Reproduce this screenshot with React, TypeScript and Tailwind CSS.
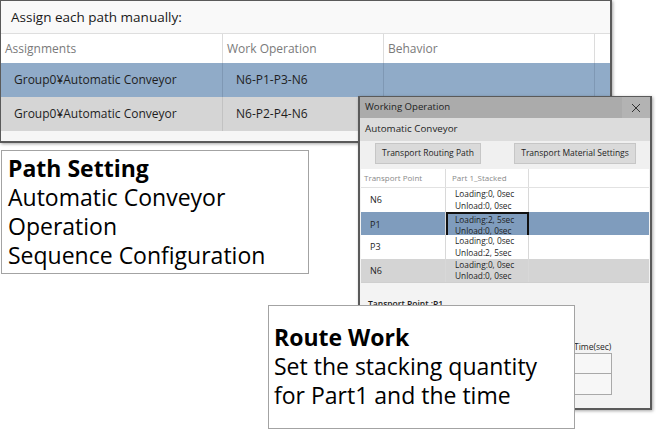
import React from "react";

const mainRows = [
  { group: "Group0¥Automatic Conveyor", op: "N6-P1-P3-N6", selected: true },
  { group: "Group0¥Automatic Conveyor", op: "N6-P2-P4-N6", selected: false },
];

const points = [
  { name: "N6", load: "Loading:0, 0sec", unload: "Unload:0, 0sec", bg: "bg-white" },
  { name: "P1", load: "Loading:2, 5sec", unload: "Unload:0, 0sec", bg: "bg-[#7f9cbd]", active: true },
  { name: "P3", load: "Loading:0, 0sec", unload: "Unload:2, 5sec", bg: "bg-white" },
  { name: "N6", load: "Loading:0, 0sec", unload: "Unload:0, 0sec", bg: "bg-[#d4d4d4]" },
];

function AssignWindow() {
  return (
    <div className="absolute left-0 top-0 w-[612px] h-[143px] border border-[#5a5a5a] border-r-2 border-b-2 bg-[#f6f6f6] flex flex-col shadow-[1px_1px_3px_rgba(0,0,0,0.35)]">
      <div className="h-[33px] shrink-0 flex items-center pl-[10px] bg-[#f9f9f9] border-b border-[#dedede] text-[13.5px] text-[#1a1a1a]">
        Assign each path manually:
      </div>
      <div className="h-[29px] shrink-0 grid grid-cols-[222px_161px_211px_1fr] bg-white text-[12px] text-[#7a7a7a]">
        <div className="flex items-center pl-[4px] border-r border-[#dcdcdc]">Assignments</div>
        <div className="flex items-center pl-[4px] border-r border-[#dcdcdc]">Work Operation</div>
        <div className="flex items-center pl-[4px] border-r border-[#dcdcdc]">Behavior</div>
        <div />
      </div>
      {mainRows.map((r, i) => (
        <div
          key={i}
          className={`h-[34px] shrink-0 grid grid-cols-[222px_161px_211px_1fr] text-[12px] text-[#1e1e1e] ${
            r.selected ? "bg-[#90abc8]" : "bg-[#d5d5d5]"
          }`}
        >
          <div className={`flex items-center pl-[13px] border-r ${r.selected ? "border-[#7f98b4]" : "border-[#c2c2c2]"}`}>{r.group}</div>
          <div className={`flex items-center pl-[13px] border-r ${r.selected ? "border-[#7f98b4]" : "border-[#c2c2c2]"}`}>{r.op}</div>
          <div className={`border-r ${r.selected ? "border-[#7f98b4]" : "border-[#c2c2c2]"}`} />
          <div />
        </div>
      ))}
    </div>
  );
}

function WorkingWindow() {
  return (
    <div className="absolute left-[358px] top-[96px] w-[294px] h-[314px] border border-[#5a5a5a] border-l-2 border-r-2 border-b-2 bg-[#f3f3f3] flex flex-col shadow-[1px_1px_3px_rgba(0,0,0,0.35)] text-[#1e1e1e]">
      <div className="h-[21px] shrink-0 flex items-center justify-between bg-[#ababab] text-[9.6px]">
        <span className="pl-[5px]">Working Operation</span>
        <span className="w-[28px] h-full flex items-center justify-center bg-[#b3b3b3]">
          <svg width="10" height="10" viewBox="0 0 10 10">
            <path d="M1 1 L9 9 M9 1 L1 9" stroke="#333" strokeWidth="1" fill="none" />
          </svg>
        </span>
      </div>
      <div className="h-[23px] shrink-0 flex items-center pl-[5px] bg-[#dcdcdc] text-[9.8px]">Automatic Conveyor</div>
      <div className="h-[28px] shrink-0 flex items-start pt-[2px] bg-[#f0f0f0] text-[8.5px]">
        <button className="ml-[15px] w-[106px] h-[21px] bg-[#dadada] border border-[#c6c6c6] flex items-center justify-center">
          Transport Routing Path
        </button>
        <button className="ml-[33px] w-[122px] h-[21px] bg-[#dadada] border border-[#c6c6c6] flex items-center justify-center">
          Transport Material Settings
        </button>
      </div>
      <div className="ml-[1px] mr-[1px] flex flex-col border-b border-[#cfcfcf]">
        <div className="h-[19px] grid grid-cols-[85px_83px_1fr] bg-white text-[8px] text-[#8a8a8a] border-b border-[#e2e2e2]">
          <div className="flex items-center pl-[3px] border-r border-[#dcdcdc]">Transport Point</div>
          <div className="flex items-center pl-[6px] border-r border-[#dcdcdc]">Part 1_Stacked</div>
          <div />
        </div>
        {points.map((p, i) => (
          <div key={i} className={`h-[23.5px] grid grid-cols-[85px_83px_1fr] text-[8.3px] ${p.bg}`}>
            <div className="flex items-center pl-[9px] text-[9px] border-r border-[#d8d8d8]">{p.name}</div>
            <div
              className={`flex flex-col justify-center leading-[11.3px] ${
                p.active ? "border-2 border-[#111] pl-[7px]" : "pl-[9px] border-r border-[#d8d8d8]"
              }`}
            >
              <span>{p.load}</span>
              <span>{p.unload}</span>
            </div>
            <div />
          </div>
        ))}
      </div>
      <div className="relative flex-1 bg-[#f3f3f3]">
        <div className="pl-[8px] pt-[15px] text-[8.5px] font-semibold">Tansport Point :P1</div>
        <div className="absolute left-[214px] top-[57px] flex flex-col text-[8.5px]">
          <span className="leading-[13px]">Time(sec)</span>
          <div className="w-[38px] h-[21px] bg-[#f7f7f7] border border-[#a9a9a9]" />
          <div className="w-[38px] h-[21px] bg-[#f7f7f7] border border-[#a9a9a9] border-t-0" />
        </div>
      </div>
    </div>
  );
}

export default function App() {
  return (
    <div className="relative w-[656px] h-[432px] bg-white overflow-hidden font-['Open_Sans','Noto_Sans',sans-serif]">
      <AssignWindow />
      <WorkingWindow />
      <div className="absolute left-[1px] top-[150px] w-[308px] h-[124px] bg-white border border-[#a3a3a3] pl-[6px] pt-[3px] text-[23px] leading-[29px] text-black">
        <div className="font-bold">Path Setting</div>
        <div>Automatic Conveyor</div>
        <div>Operation</div>
        <div>Sequence Configuration</div>
      </div>
      <div className="absolute left-[268px] top-[305px] w-[307px] h-[124px] bg-white border border-[#a3a3a3] pl-[5px] pt-[17px] text-[23px] leading-[29px] text-black">
        <div className="font-bold">Route Work</div>
        <div>Set the stacking quantity</div>
        <div>for Part1 and the time</div>
      </div>
    </div>
  );
}
